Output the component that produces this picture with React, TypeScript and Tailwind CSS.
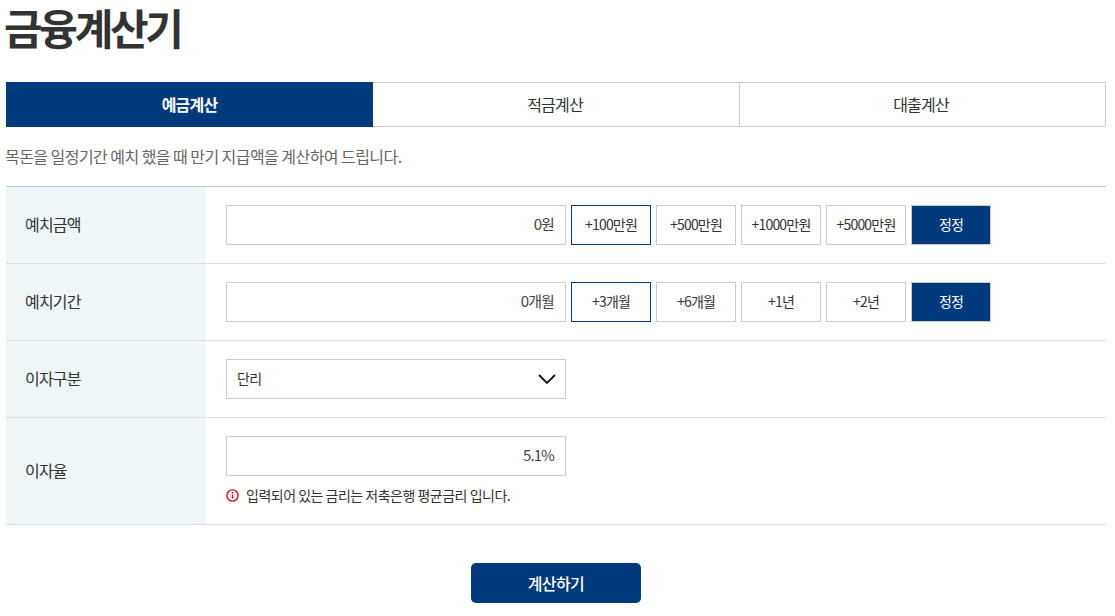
const font = "font-['Noto_Sans_CJK_KR','Noto_Sans',sans-serif]";

function AddButtons({ items }: { items: string[] }) {
  return (
    <>
      {items.map((item, index) => (
        <button
          key={item}
          className={`w-20 h-10 bg-white border pb-[1px] text-[14px] tracking-[-0.8px] text-[#333] ${
            index === 0 ? 'border-[#00397c]' : 'border-[#ccc]'
          }`}
        >
          {item}
        </button>
      ))}
      <button className="w-20 h-10 bg-[#00397c] border border-[#ccc] pb-[1px] text-[14px] tracking-[-0.8px] text-white">
        정정
      </button>
    </>
  );
}

function Field({ value }: { value: string }) {
  return (
    <div className="w-[340px] h-10 shrink-0 border border-[#ccc] bg-white flex items-center justify-end pb-[1px] px-[11px] text-[15px] tracking-[-0.9px] text-[#444]">
      {value}
    </div>
  );
}

function Row({ label, children, tall }: { label: string; children: React.ReactNode; tall?: boolean }) {
  return (
    <div className={`flex border-b border-[#ddd] ${tall ? 'h-[107px]' : 'h-[77px]'}`}>
      <div className="w-[200px] shrink-0 bg-[#eef6f8] flex items-center pb-[2px] pl-[19px] text-[16px] tracking-[-0.8px] text-[#333]">
        {label}
      </div>
      <div className="flex-1 pl-5 pt-[18px]">{children}</div>
    </div>
  );
}

export default function App() {
  return (
    <div className={`${font} w-[1115px] h-[616px] overflow-hidden bg-white px-[6px]`}>
      <div className="w-[1100px]">
        <div className="h-[82px] pt-[6px]">
          <h1 className="-ml-[2px] text-[42px] leading-[42px] font-bold tracking-[-3.3px] text-[#333]">금융계산기</h1>
        </div>

        <div className="flex h-[45px] text-[16px] tracking-[-0.8px]">
          <div className="w-[367px] bg-[#00397c] text-white font-bold flex items-center justify-center pb-[2px]">예금계산</div>
          <div className="w-[367px] border-y border-r border-[#ccc] text-[#333] flex items-center justify-center pb-[2px] pr-[2px]">적금계산</div>
          <div className="flex-1 border-y border-r border-[#ccc] text-[#333] flex items-center justify-center pb-[2px] pr-[3px]">대출계산</div>
        </div>

        <p className="h-[59px] pt-[18px] -ml-[1px] text-[16px] leading-[22px] tracking-[-0.55px] text-[#666]">
          목돈을 일정기간 예치 했을 때 만기 지급액을 계산하여 드립니다.
        </p>

        <div className="border-t border-[#b9c9e0]">
          <Row label="예치금액">
            <div className="flex gap-[5px]">
              <Field value="0원" />
              <AddButtons items={['+100만원', '+500만원', '+1000만원', '+5000만원']} />
            </div>
          </Row>
          <Row label="예치기간">
            <div className="flex gap-[5px]">
              <Field value="0개월" />
              <AddButtons items={['+3개월', '+6개월', '+1년', '+2년']} />
            </div>
          </Row>
          <Row label="이자구분">
            <div className="w-[340px] h-10 border border-[#ccc] flex items-center justify-between pb-[2px] pl-[10px] pr-[9px] text-[14px] tracking-[-0.6px] text-[#333]">
              <span>단리</span>
              <svg className="mt-[2px]" width="18" height="10" viewBox="0 0 18 10" fill="none" stroke="#111" strokeWidth="1.8">
                <path d="M1 1l8 8 8-8" />
              </svg>
            </div>
          </Row>
          <Row label="이자율" tall>
            <Field value="5.1%" />
            <div className="flex items-center gap-[7px] mt-[9px] text-[14px] leading-5 tracking-[-0.5px] text-[#333]">
              <svg width="13" height="13" viewBox="0 0 13 13" fill="none" stroke="#c8101e">
                <circle cx="6.5" cy="6.5" r="5.6" strokeWidth="1.4" />
                <path d="M6.5 5.5v4M6.5 3v1.4" strokeWidth="1.5" />
              </svg>
              <span>입력되어 있는 금리는 저축은행 평균금리 입니다.</span>
            </div>
          </Row>
        </div>

        <div className="flex justify-center pt-[38px]">
          <button className="w-[170px] h-10 rounded-[5px] bg-[#00397c] text-white text-[16px] font-medium tracking-[-0.6px]">
            계산하기
          </button>
        </div>
      </div>
    </div>
  );
}
